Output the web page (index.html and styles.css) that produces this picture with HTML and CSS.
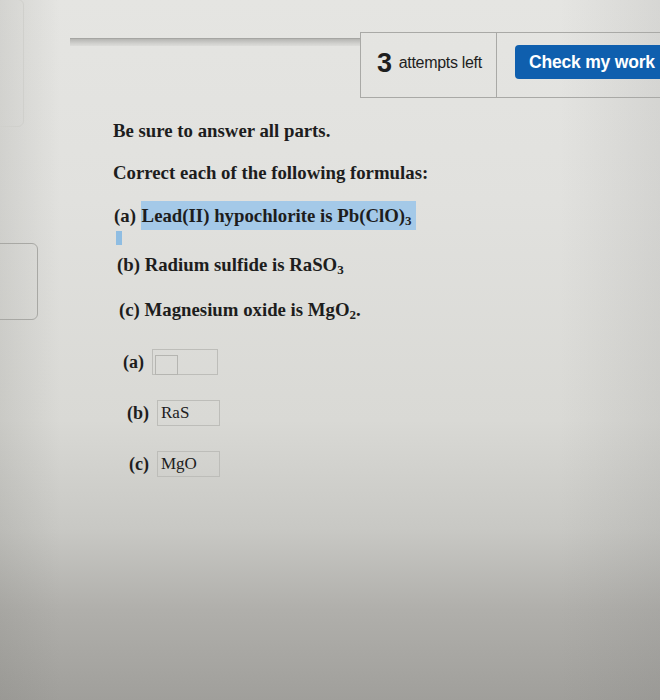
FILE: index.html
```html
<!DOCTYPE html>
<html>
<head>
<meta charset="utf-8">
<link rel="stylesheet" href="styles.css">
</head>
<body>
<div class="page">
  <div class="rail">
    <div class="tab tab-top"></div>
    <div class="tab tab-mid"></div>
  </div>
  <div class="main">
    <div class="header">
      <div class="rule"></div>
      <div class="status">
        <div class="attempts"><span class="num">3</span><span class="lbl">attempts left</span></div>
        <div class="check-cell"><button class="check">Check my work</button></div>
      </div>
    </div>
    <div class="question">
      <p class="line l1">Be sure to answer all parts.</p>
      <p class="line l2">Correct each of the following formulas:</p>
      <p class="line l3">(a) <span class="hl">Lead(II) hypochlorite is Pb(ClO)<sub>3</sub></span></p>
      <div class="caret"></div>
      <p class="line l4">(b) Radium sulfide is RaSO<sub>3</sub></p>
      <p class="line l5">(c) Magnesium oxide is MgO<sub>2</sub>.</p>
    </div>
    <div class="answers">
      <div class="ans ans-a"><span class="alabel">(a)</span><span class="field"><span class="inner"></span></span></div>
      <div class="ans ans-b"><span class="alabel">(b)</span><span class="field">RaS</span></div>
      <div class="ans ans-c"><span class="alabel">(c)</span><span class="field">MgO</span></div>
    </div>
  </div>
</div>
</body>
</html>
```

FILE: styles.css
```css
html, body {
  margin: 0;
  padding: 0;
  height: 700px;
  overflow: hidden;
}
body {
  background:
    linear-gradient(90deg, rgba(120,120,115,0.16) 0px, rgba(120,120,115,0) 60px, rgba(0,0,0,0) 560px, rgba(110,110,110,0.12) 660px),
    linear-gradient(180deg, #e5e5e2 0px, #e1e1de 200px, #d9d9d5 420px, #c8c8c4 530px, #b0afab 610px, #a09f9b 700px);
  font-family: "Liberation Serif", "Times New Roman", serif;
  color: #1d1d1d;
}
.page {
  display: grid;
  grid-template-columns: 40px 1fr;
  height: 700px;
}
.rail {
  display: flex;
  flex-direction: column;
}
.tab {
  border: 1px solid #c4c4c0;
  border-radius: 6px;
}
.tab-top {
  margin-left: -20px;
  width: 42px;
  height: 126px;
  margin-top: -1px;
  border-color: #d0d0cc;
}
.tab-mid {
  margin-left: -20px;
  width: 56px;
  height: 75px;
  margin-top: 116px;
  border-color: #a8a8a4;
}
.main {
  display: flex;
  flex-direction: column;
}
.header {
  display: flex;
  margin-top: 32px;
  margin-left: 30px;
}
.rule {
  width: 290px;
  height: 7px;
  margin-top: 6px;
  background: linear-gradient(180deg, #b5b5b2 0%, #cfcfcc 60%, #dcdcd9 100%);
  border-top: 1px solid #a5a5a2;
}
.status {
  display: flex;
  height: 64px;
  border: 1px solid #a9a9a6;
  border-right: none;
  flex: 1;
}
.attempts {
  width: 136px;
  border-right: 1px solid #a9a9a6;
  display: flex;
  align-items: center;
  justify-content: center;
  gap: 7px;
  font-family: "Liberation Sans", Arial, sans-serif;
  color: #1e1e1e;
  padding-bottom: 4px;
  padding-left: 2px;
  box-sizing: border-box;
}
.num {
  font-size: 27px;
  font-weight: bold;
  letter-spacing: -0.5px;
}
.lbl {
  font-size: 16px;
  letter-spacing: -0.3px;
}
.check-cell {
  display: flex;
  align-items: center;
  padding-left: 18px;
  padding-bottom: 6px;
}
.check {
  background: #0f5fae;
  color: #ffffff;
  border: none;
  border-radius: 4px 0 0 4px;
  height: 34px;
  width: 150px;
  padding: 0 0 0 14px;
  text-align: left;
  font-family: "Liberation Sans", Arial, sans-serif;
  font-weight: bold;
  font-size: 17.5px;
  letter-spacing: -0.2px;
  white-space: nowrap;
}
.question {
  display: flex;
  flex-direction: column;
  margin-left: 73px;
  margin-top: 22px;
}
.line {
  margin: 0;
  font-weight: bold;
  font-size: 18.8px;
  line-height: 22px;
}
.line sub {
  font-size: 13px;
  line-height: 0;
  vertical-align: -3px;
}
.l2 { margin-top: 20px; }
.l3 { margin-top: 21px; margin-left: 1px; }
.hl {
  background: #a4c9e8;
  padding: 4px 4px 4px 1px;
}
.caret {
  width: 6px;
  height: 14px;
  background: #8fbde2;
  margin-left: 3px;
  margin-top: 4px;
}
.l4 { margin-top: 9px; margin-left: 4px; }
.l5 { margin-top: 23px; margin-left: 6px; }
.answers {
  display: flex;
  flex-direction: column;
  margin-top: 28px;
}
.ans {
  display: flex;
  align-items: center;
  gap: 8px;
}
.alabel {
  font-weight: bold;
  font-size: 18px;
}
.field {
  display: flex;
  align-items: center;
  height: 26px;
  width: 63px;
  border: 1px solid #bdbdb9;
  box-sizing: border-box;
  font-size: 17px;
  padding-left: 3px;
  color: #1d1d1d;
}
.ans-a { margin-left: 83px; }
.ans-a .field {
  width: 66px;
  padding-left: 2px;
  align-items: flex-end;
}
.inner {
  width: 23px;
  height: 20px;
  border: 1px solid #b5b5b1;
  box-sizing: border-box;
  margin-bottom: -1px;
}
.ans-b { margin-left: 87px; margin-top: 25px; }
.ans-c { margin-left: 89px; margin-top: 25px; }
```
